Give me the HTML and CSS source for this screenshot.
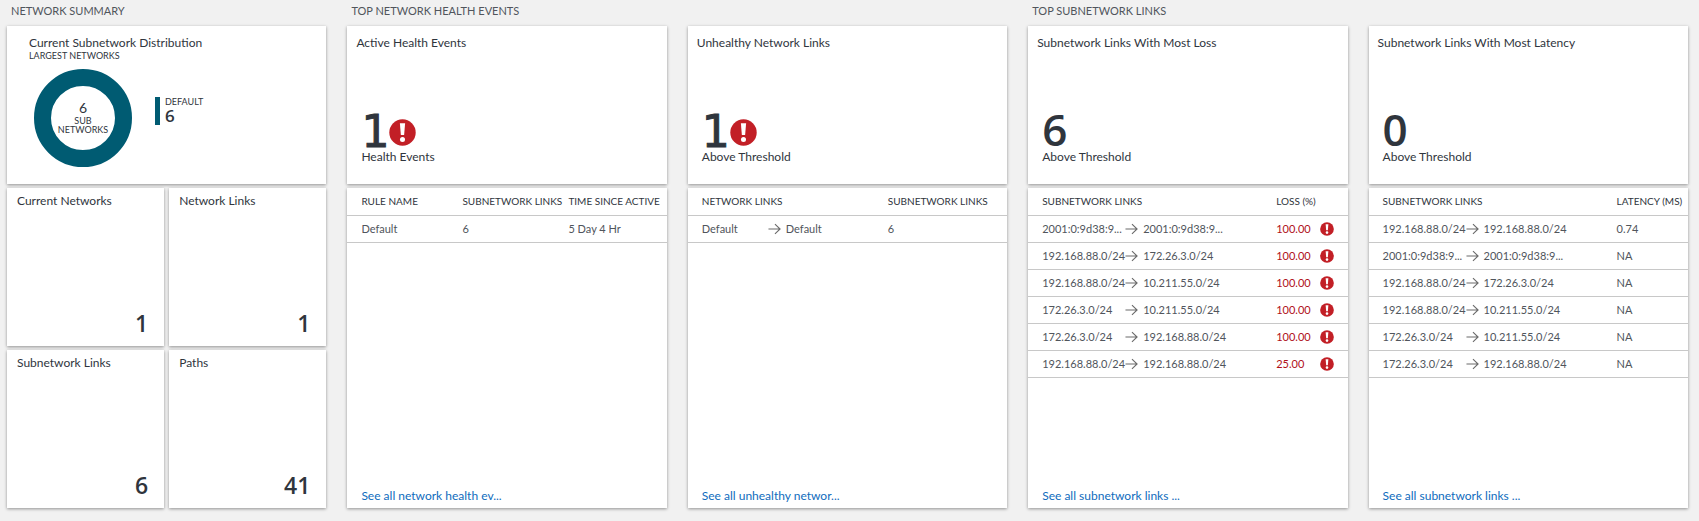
FILE: index.html
```html
<!DOCTYPE html>
<html lang="en">
<head>
<meta charset="utf-8">
<title>Network Performance</title>
<link rel="stylesheet" href="styles.css">
</head>
<body>
<svg class="sprite" aria-hidden="true">
  <symbol id="alert" viewBox="0 0 28 28">
    <circle cx="14" cy="14" r="13.7" fill="#c21f26"/>
    <path d="M11.3 4.5h5.4l-1 12.2h-3.4z" fill="#fff"/>
    <circle cx="14" cy="21.2" r="2.6" fill="#fff"/>
  </symbol>
  <symbol id="arrow" viewBox="0 0 14 12">
    <path d="M0.5 6H13M7.5 0.8L13 6L7.5 11.2" fill="none" stroke="#6b6b6b" stroke-width="1.2"/>
  </symbol>
</svg>
<main class="dashboard">
  <section class="group">
    <h2 class="group-title">NETWORK SUMMARY</h2>
    <div class="column">
      <article class="card card-distribution">
        <h3 class="card-title">Current Subnetwork Distribution</h3>
        <p class="card-subtitle">LARGEST NETWORKS</p>
        <div class="distribution">
          <div class="donut">
            <div class="donut-total">6</div>
            <div class="donut-label">SUB<br>NETWORKS</div>
          </div>
          <div class="legend">
            <div class="legend-name">DEFAULT</div>
            <div class="legend-value">6</div>
          </div>
        </div>
      </article>
      <div class="tiles">
        <article class="card tile"><h3 class="card-title">Current Networks</h3><div class="tile-value">1</div></article>
        <article class="card tile"><h3 class="card-title">Network Links</h3><div class="tile-value">1</div></article>
        <article class="card tile"><h3 class="card-title">Subnetwork Links</h3><div class="tile-value">6</div></article>
        <article class="card tile"><h3 class="card-title">Paths</h3><div class="tile-value">41</div></article>
      </div>
    </div>
  </section>

  <section class="group group-wide">
    <h2 class="group-title">TOP NETWORK HEALTH EVENTS</h2>
    <div class="column">
      <article class="card card-metric">
        <h3 class="card-title">Active Health Events</h3>
        <div class="metric"><span class="metric-value metric-alert">1</span><svg class="icon-large"><use href="#alert"/></svg></div>
        <p class="metric-label">Health Events</p>
      </article>
      <article class="card card-list">
        <table class="list">
          <colgroup><col class="col-rule"><col class="col-links"><col></colgroup>
          <thead><tr><th>RULE NAME</th><th>SUBNETWORK LINKS</th><th>TIME SINCE ACTIVE</th></tr></thead>
          <tbody><tr><td>Default</td><td>6</td><td>5 Day 4 Hr</td></tr></tbody>
        </table>
        <a class="see-all" href="#">See all network health ev...</a>
      </article>
    </div>
    <div class="column">
      <article class="card card-metric">
        <h3 class="card-title">Unhealthy Network Links</h3>
        <div class="metric"><span class="metric-value metric-alert">1</span><svg class="icon-large"><use href="#alert"/></svg></div>
        <p class="metric-label">Above Threshold</p>
      </article>
      <article class="card card-list">
        <table class="list">
          <colgroup><col class="col-network"><col class="col-arrow"><col class="col-target-short"><col></colgroup>
          <thead><tr><th colspan="3">NETWORK LINKS</th><th>SUBNETWORK LINKS</th></tr></thead>
          <tbody><tr><td>Default</td><td><svg class="arrow"><use href="#arrow"/></svg></td><td>Default</td><td>6</td></tr></tbody>
        </table>
        <a class="see-all" href="#">See all unhealthy networ...</a>
      </article>
    </div>
  </section>

  <section class="group group-wide">
    <h2 class="group-title">TOP SUBNETWORK LINKS</h2>
    <div class="column">
      <article class="card card-metric">
        <h3 class="card-title">Subnetwork Links With Most Loss</h3>
        <div class="metric"><span class="metric-value">6</span></div>
        <p class="metric-label">Above Threshold</p>
      </article>
      <article class="card card-list">
        <table class="list">
          <colgroup><col class="col-source"><col class="col-arrow"><col class="col-target"><col class="col-loss"><col></colgroup>
          <thead><tr><th colspan="3">SUBNETWORK LINKS</th><th colspan="2">LOSS (%)</th></tr></thead>
          <tbody>
            <tr><td>2001:0:9d38:9...</td><td><svg class="arrow"><use href="#arrow"/></svg></td><td>2001:0:9d38:9...</td><td class="loss">100.00</td><td><svg class="icon-small"><use href="#alert"/></svg></td></tr>
            <tr><td>192.168.88.0/24</td><td><svg class="arrow"><use href="#arrow"/></svg></td><td>172.26.3.0/24</td><td class="loss">100.00</td><td><svg class="icon-small"><use href="#alert"/></svg></td></tr>
            <tr><td>192.168.88.0/24</td><td><svg class="arrow"><use href="#arrow"/></svg></td><td>10.211.55.0/24</td><td class="loss">100.00</td><td><svg class="icon-small"><use href="#alert"/></svg></td></tr>
            <tr><td>172.26.3.0/24</td><td><svg class="arrow"><use href="#arrow"/></svg></td><td>10.211.55.0/24</td><td class="loss">100.00</td><td><svg class="icon-small"><use href="#alert"/></svg></td></tr>
            <tr><td>172.26.3.0/24</td><td><svg class="arrow"><use href="#arrow"/></svg></td><td>192.168.88.0/24</td><td class="loss">100.00</td><td><svg class="icon-small"><use href="#alert"/></svg></td></tr>
            <tr><td>192.168.88.0/24</td><td><svg class="arrow"><use href="#arrow"/></svg></td><td>192.168.88.0/24</td><td class="loss">25.00</td><td><svg class="icon-small"><use href="#alert"/></svg></td></tr>
          </tbody>
        </table>
        <a class="see-all" href="#">See all subnetwork links ...</a>
      </article>
    </div>
    <div class="column">
      <article class="card card-metric">
        <h3 class="card-title">Subnetwork Links With Most Latency</h3>
        <div class="metric"><span class="metric-value">0</span></div>
        <p class="metric-label">Above Threshold</p>
      </article>
      <article class="card card-list">
        <table class="list">
          <colgroup><col class="col-source"><col class="col-arrow"><col class="col-target"><col></colgroup>
          <thead><tr><th colspan="3">SUBNETWORK LINKS</th><th>LATENCY (MS)</th></tr></thead>
          <tbody>
            <tr><td>192.168.88.0/24</td><td><svg class="arrow"><use href="#arrow"/></svg></td><td>192.168.88.0/24</td><td>0.74</td></tr>
            <tr><td>2001:0:9d38:9...</td><td><svg class="arrow"><use href="#arrow"/></svg></td><td>2001:0:9d38:9...</td><td>NA</td></tr>
            <tr><td>192.168.88.0/24</td><td><svg class="arrow"><use href="#arrow"/></svg></td><td>172.26.3.0/24</td><td>NA</td></tr>
            <tr><td>192.168.88.0/24</td><td><svg class="arrow"><use href="#arrow"/></svg></td><td>10.211.55.0/24</td><td>NA</td></tr>
            <tr><td>172.26.3.0/24</td><td><svg class="arrow"><use href="#arrow"/></svg></td><td>10.211.55.0/24</td><td>NA</td></tr>
            <tr><td>172.26.3.0/24</td><td><svg class="arrow"><use href="#arrow"/></svg></td><td>192.168.88.0/24</td><td>NA</td></tr>
          </tbody>
        </table>
        <a class="see-all" href="#">See all subnetwork links ...</a>
      </article>
    </div>
  </section>
</main>
</body>
</html>
```
FILE: styles.css
```css
* { box-sizing: border-box; }

body {
  margin: 0;
  background: #f1f1f1;
  color: #2f353d;
  font-family: Lato, "Open Sans", sans-serif;
  font-size: 12px;
  line-height: 14px;
}

h2, h3, p { margin: 0; font-weight: 400; }

.sprite { display: none; }
svg { display: block; }

.dashboard {
  display: grid;
  grid-template-columns: repeat(5, minmax(0, 1fr));
  column-gap: 21px;
  padding: 0 11px 13px 7px;
}

.group {
  grid-column: span 1;
  display: grid;
  grid-template-columns: minmax(0, 1fr);
  grid-template-rows: 26px auto;
  column-gap: 21px;
}

.group-wide {
  grid-column: span 2;
  grid-template-columns: repeat(2, minmax(0, 1fr));
}

.group-title {
  grid-column: 1 / -1;
  padding: 4px;
  font-size: 11px;
  color: #50555c;
}

.column { display: flex; flex-direction: column; gap: 4px; }

.card {
  min-height: 158px;
  background: #fff;
  box-shadow: 0 1px 3px rgba(0, 0, 0, 0.4);
}

.card-title { font-size: 12px; }

/* Distribution */
.card-distribution { padding: 10px 22px; }
.card-subtitle { font-size: 9px; line-height: 12px; }
.distribution { display: flex; align-items: flex-start; padding: 7px 5px; }

.donut {
  width: 98px;
  height: 98px;
  padding-top: 14px;
  border: 17px solid #005b72;
  border-radius: 50%;
  text-align: center;
}
.donut-total { font-size: 14px; line-height: 16px; }
.donut-label {
  display: flex;
  flex-direction: column;
  align-items: center;
  font-size: 9px;
  line-height: 9px;
}

.legend {
  margin: 28px 0 0 23px;
  padding-left: 5px;
  border-left: 5px solid #005b72;
}
.legend-name { font-size: 9px; line-height: 10px; }
.legend-value {
  font-family: "Open Sans", sans-serif;
  font-size: 17px;
  font-weight: 600;
  line-height: 18px;
}

/* Count tiles */
.tiles { display: grid; grid-template-columns: repeat(2, minmax(0, 1fr)); gap: 4px 5px; }
.tile {
  display: flex;
  flex-direction: column;
  justify-content: space-between;
  padding: 6px 16px 10px 10px;
}
.tile-value {
  font-family: "Open Sans", sans-serif;
  font-size: 23px;
  line-height: 26px;
  font-weight: 600;
  text-align: right;
}

/* Metrics */
.card-metric { padding: 10px 9px; }
.metric { display: flex; align-items: center; height: 41px; margin: 59px 0 0 5px; }
.metric-value { font-family: "Open Sans", sans-serif; font-size: 44px; line-height: 41px; font-weight: 600; }
.metric-alert {
  padding-top: 4px;
  font-family: "DejaVu Sans", sans-serif;
  font-weight: 400;
  -webkit-text-stroke: 1px currentColor;
}
.icon-large { width: 27px; height: 27px; margin-top: 6px; }
.metric-label { padding-left: 5px; }

/* Lists */
.card-list {
  flex: 1;
  min-height: 320px;
  display: flex;
  flex-direction: column;
  justify-content: space-between;
}
.list { width: 100%; table-layout: fixed; border-collapse: collapse; }
.list th, .list td {
  height: 27px;
  padding: 0;
  border-bottom: 1px solid #c8c8c8;
  text-align: left;
  font-weight: 400;
  white-space: nowrap;
}
.list th { font-size: 10px; }
.list td { font-size: 11px; color: #50555c; }
.list th:first-child, .list td:first-child { padding-left: 14px; }
.list td.loss { color: #b01018; }

.col-rule { width: 115px; }
.col-links { width: 106px; }
.col-network { width: 80px; }
.col-source { width: 97px; }
.col-arrow { width: 18px; }
.col-target-short { width: 102px; }
.col-target { width: 133px; }
.col-loss { width: 44px; }

.arrow { width: 13px; height: 12px; }
.icon-small { width: 14px; height: 14px; }

.see-all { align-self: flex-start; padding: 0 14px 5px; color: #0f6cbd; text-decoration: none; }
```
